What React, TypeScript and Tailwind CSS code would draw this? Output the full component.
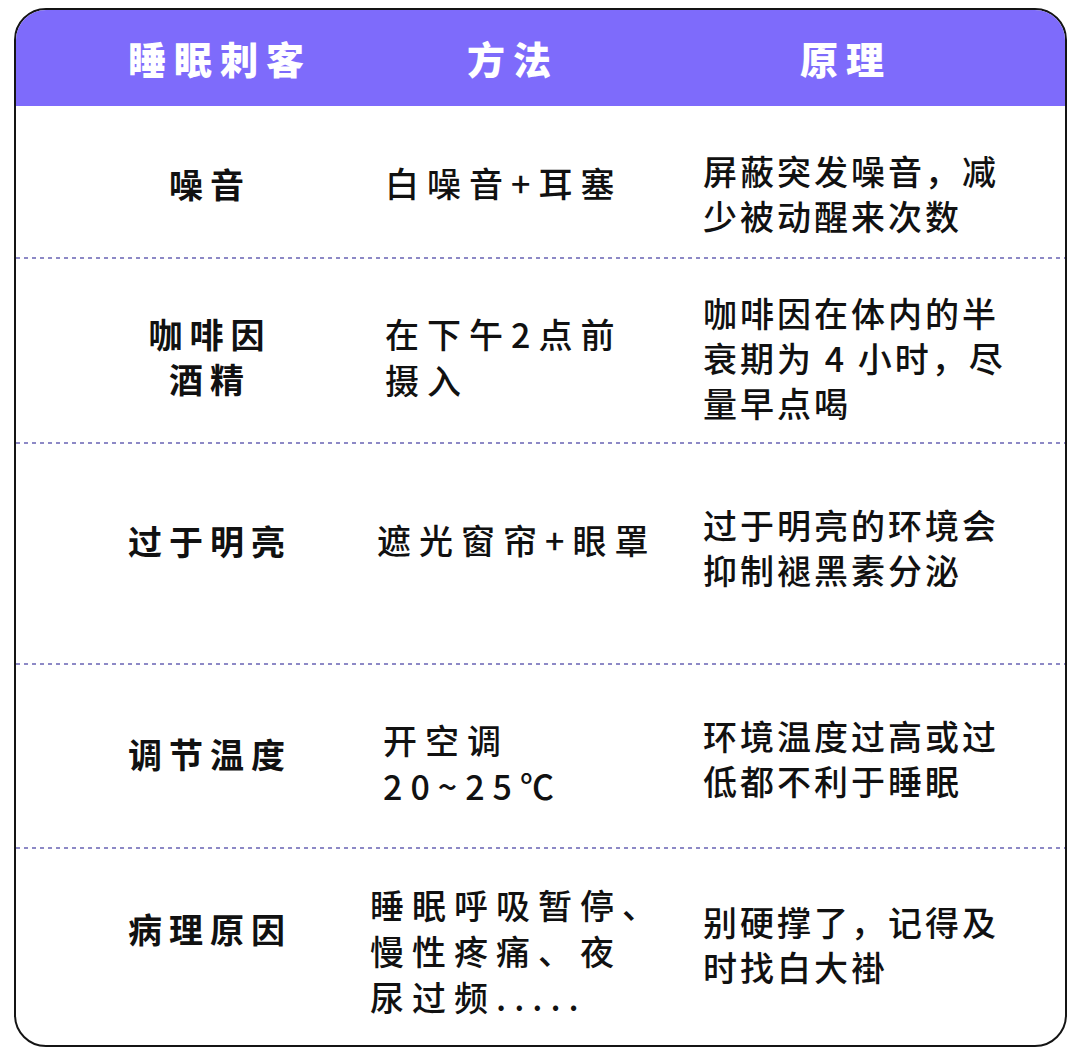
import React from "react";

const FONT = { fontFamily: '"Noto Sans CJK SC", "Noto Sans", sans-serif' };

type Row = {
  h: string;
  c1: React.ReactNode;
  c2: React.ReactNode;
  c3: React.ReactNode;
  p1: string;
  p2: string;
  p3: string;
};

const rows: Row[] = [
  {
    h: "h-[151px]",
    c1: <>噪音</>,
    c2: <>白噪音+耳塞</>,
    c3: (
      <>
        屏蔽突发噪音，减
        <br />
        少被动醒来次数
      </>
    ),
    p1: "pt-[3px]",
    p2: "pt-[3px] pl-[25px]",
    p3: "pt-[22px]",
  },
  {
    h: "h-[183px]",
    c1: (
      <>
        咖啡因
        <br />
        酒精
      </>
    ),
    c2: (
      <>
        在下午2点前
        <br />
        摄入
      </>
    ),
    c3: (
      <>
        咖啡因在体内的半
        <br />
        衰期为 4 小时，尽
        <br />
        量早点喝
      </>
    ),
    p1: "pt-[10px]",
    p2: "pt-[12px] pl-[25px]",
    p3: "pt-[14px]",
  },
  {
    h: "h-[219px]",
    c1: <>过于明亮</>,
    c2: <>遮光窗帘+眼罩</>,
    c3: (
      <>
        过于明亮的环境会
        <br />
        抑制褪黑素分泌
      </>
    ),
    p1: "pb-[27px]",
    p2: "pb-[27px] pl-[17px]",
    p3: "pb-[14px]",
  },
  {
    h: "h-[182px]",
    c1: <>调节温度</>,
    c2: (
      <>
        开空调
        <br />
        20~25℃
      </>
    ),
    c3: (
      <>
        环境温度过高或过
        <br />
        低都不利于睡眠
      </>
    ),
    p1: "pb-[6px]",
    p2: "pt-[13px] pl-[23px]",
    p3: "pt-[3px]",
  },
  {
    h: "h-[196px]",
    c1: <>病理原因</>,
    c2: (
      <>
        睡眠呼吸暂停、
        <br />
        慢性疼痛、夜
        <br />
        尿过频.....
      </>
    ),
    c3: (
      <>
        别硬撑了，记得及
        <br />
        时找白大褂
      </>
    ),
    p1: "pb-[38px]",
    p2: "pt-[8px] pl-[10px]",
    p3: "pb-[7px]",
  },
];

function Sep() {
  return (
    <div className="h-[2px] w-full bg-[repeating-linear-gradient(90deg,#8d89c6_0px,#8d89c6_4px,transparent_4px,transparent_8px)]" />
  );
}

export default function App() {
  return (
    <div className="w-[1080px] h-[1054px] bg-white pt-[8px] pl-[14px]" style={FONT}>
      <div className="w-[1053px] h-[1039px] border-2 border-[#141414] rounded-[32px] overflow-hidden flex flex-col bg-white">
        <div className="h-[96px] shrink-0 bg-[#7e6bfb] grid grid-cols-[344px_330px_1fr] text-white text-[38px] font-black tracking-[8px] leading-none">
          <div className="flex items-center pl-[112px]">睡眠刺客</div>
          <div className="flex items-center pl-[107px]">方法</div>
          <div className="flex items-center pl-[110px]">原理</div>
        </div>
        {rows.map((r, i) => (
          <React.Fragment key={i}>
            {i > 0 && <Sep />}
            <div className={`${r.h} shrink-0 grid grid-cols-[344px_330px_1fr] text-[#111]`}>
              <div className={`flex items-center justify-center pl-[44px] ${r.p1}`}>
                <div className="text-center text-[34px] font-bold tracking-[7px] leading-[45px]">{r.c1}</div>
              </div>
              <div className={`flex items-center ${r.p2}`}>
                <div className="text-left text-[34px] font-medium tracking-[8px] leading-[46px] whitespace-nowrap">{r.c2}</div>
              </div>
              <div className={`flex items-center pl-[13px] ${r.p3}`}>
                <div className="text-left text-[34px] font-medium tracking-[3px] leading-[45px] whitespace-nowrap">{r.c3}</div>
              </div>
            </div>
          </React.Fragment>
        ))}
      </div>
    </div>
  );
}
